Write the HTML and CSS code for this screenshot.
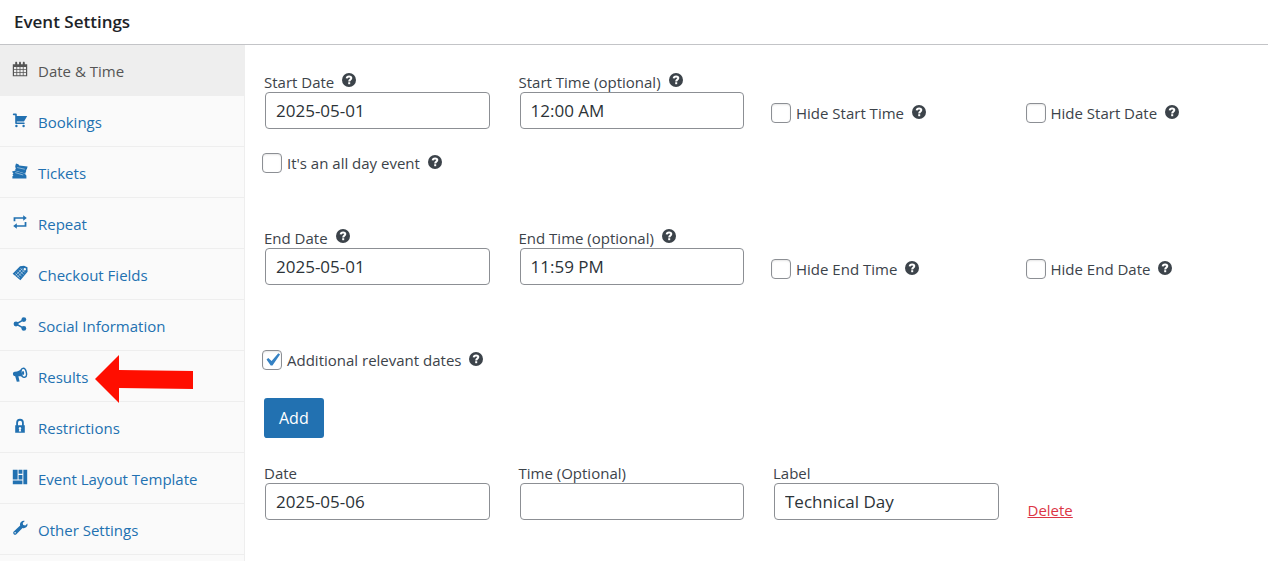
FILE: index.html
```html
<!DOCTYPE html>
<html lang="en">
<head>
  <meta charset="UTF-8">
  <title>Event Settings</title>
  <link rel="stylesheet" href="styles.css">
</head>
<body>

  <!-- shared help icon -->
  <svg class="defs" width="0" height="0">
    <symbol id="help" viewBox="0 0 14 14">
      <circle cx="7" cy="7" r="7" fill="#3c434a"/>
      <path d="M4.700 5.400C4.800 4 5.800 3.400 7.100 3.400c1.300 0 2.200.7 2.200 1.700 0 1.600-2.100 1.500-2.100 3.300" fill="none" stroke="#fff" stroke-width="2"/>
      <rect x="6.200" y="9.200" width="2" height="2" fill="#fff"/>
    </symbol>
  </svg>

  <header>
    <h2>Event Settings</h2>
  </header>

  <div class="panel">
    <nav>
      <ul>
        <li class="active"><a href="#">
          <svg class="icon" viewBox="0 0 20 20"><path fill-rule="evenodd" d="M1 4h3V2.500C4 1.700 4.400 1 5.200 1S6.500 1.700 6.500 2.500V4h2.300V2.500C8.800 1.700 9.200 1 10 1s1.200.7 1.200 1.500V4h2.300V2.500c0-.8.4-1.500 1.200-1.500S16 1.700 16 2.500V4h3v15H1zM2.500 7.500v2.800h3V7.500zm4 0v2.800h3V7.500zm4 0v2.800h3V7.500zm4 0v2.800h3V7.500zM2.500 11.300v2.800h3v-2.800zm4 0v2.800h3v-2.800zm4 0v2.800h3v-2.800zm4 0v2.800h3v-2.800zM2.500 15v2.800h3V15zm4 0v2.800h3V15zm4 0v2.800h3V15zm4 0v2.800h3V15z"/></svg>
          <span>Date &amp; Time</span></a></li>
        <li><a href="#">
          <svg class="icon" viewBox="0 0 20 20"><path d="M6 13h9c.55 0 1 .45 1 1s-.45 1-1 1H5c-.55 0-1-.45-1-1V4H2c-.55 0-1-.45-1-1s.45-1 1-1h3c.55 0 1 .45 1 1v2h13l-4 7H6v1z"/><circle cx="5.500" cy="17.500" r="1.500"/><circle cx="14.500" cy="17.500" r="1.500"/></svg>
          <span>Bookings</span></a></li>
        <li><a href="#">
          <svg class="icon" viewBox="0 0 20 20"><path d="M5 .5l3 1.200 1 1.300L19.500 4.500 18.500 8l-1 .4.300 1.600-1.300 3L3.500 9.500l1.300-2.500-.5-1.500-.3-1.500z"/><path d="M0 10.500l3.500-.8L17 13.300l-.2 1.400 1.200 1v3.800H.5v-3l1.300-1L.5 14.500l1.300-1.200z"/><path d="M6.500 5.700l9.500 2.100M4 12l10 3" fill="none" stroke="#fafafa" stroke-width=".6"/></svg>
          <span>Tickets</span></a></li>
        <li><a href="#">
          <svg class="icon" viewBox="0 0 20 20"><path d="M2 9V4h12V1.500L18.500 5 14 8.500V6H4.200v3zM18 10v6H6v2.500L1.500 15 6 11.500V14h9.800v-4z"/></svg>
          <span>Repeat</span></a></li>
        <li><a href="#">
          <svg class="icon" viewBox="0 0 20 20"><path fill-rule="evenodd" d="M.8 11L10 1.500l5-.5 4.300 1.800.2 5.700L10.500 19zm15.200-7.300a1.500 1.500 0 1 0 0 3 1.500 1.500 0 0 0 0-3z"/><path d="M4 10.500l6 6M6.200 8.300l6 6M8.400 6.100l6 6M10.600 3.900l5.500 5.500M4.500 13l8.500-8.500M6.700 15.200l8.500-8.500" fill="none" stroke="#fafafa" stroke-width=".6"/></svg>
          <span>Checkout Fields</span></a></li>
        <li><a href="#">
          <svg class="icon" viewBox="0 0 20 20"><path d="M15 4.500L5 10l10 5.500" fill="none" stroke="currentColor" stroke-width="2"/><circle cx="14.800" cy="4.500" r="3"/><circle cx="5" cy="10" r="3"/><circle cx="14.800" cy="15.500" r="3"/></svg>
          <span>Social Information</span></a></li>
        <li><a href="#">
          <svg class="icon" viewBox="0 0 20 20"><path d="M12.500 1.500C10 4.500 7.500 5.500 3.500 6 1.800 6.300 1 7.500 1.200 9s1.300 2.500 2.800 2.500L6 18.500l3.500-.5-1.500-6.300c2.500-.2 4.500.3 7 1.800z"/><ellipse cx="14.700" cy="7.300" rx="3.300" ry="5.700" transform="rotate(-12 14.700 7.300)" fill="#fafafa" stroke="currentColor" stroke-width="1.800"/><ellipse cx="13.800" cy="7.500" rx="1.400" ry="2.500"/></svg>
          <span>Results</span></a>
          <svg class="arrow" viewBox="0 0 98 48"><path d="M0 24L24 0v15l74 1v18l-74-1v15z" fill="#ff0e00"/></svg></li>
        <li><a href="#">
          <svg class="icon" viewBox="0 0 20 20"><path fill-rule="evenodd" d="M4 9h1.200V6a4.800 5 0 0 1 9.600 0v3H16v9.500H4zm3.500 0h5V6a2.500 2.700 0 0 0-5 0zm1.600 5.200l-.6 2.600h3l-.6-2.600a1.600 1.600 0 1 0-1.800 0z"/></svg>
          <span>Restrictions</span></a></li>
        <li><a href="#">
          <svg class="icon" viewBox="0 0 20 20"><path d="M1 1h6v12H1zM8.200 1H13v5H8.200zM8.200 7.500H13V13H8.200zM14.200 1H19v18h-4.800zM1 14.300h12V19H1z"/></svg>
          <span>Event Layout Template</span></a></li>
        <li><a href="#">
          <svg class="icon" viewBox="0 0 20 20"><path d="M16.700 6.800l2.500-2.400c.5 2-.1 3.700-1.500 4.800-1.400 1.100-3 1.300-4.500.7L5.500 17.700c-1 .9-2.400.9-3.300 0s-.9-2.300 0-3.200l8-7.500C9.700 5.300 10 3.600 11.300 2.400c1.300-1.200 3.100-1.600 4.700-1.100l-2.600 2.500.6 2.300z"/><circle cx="3.900" cy="16" r=".9" fill="#fafafa"/></svg>
          <span>Other Settings</span></a></li>
      </ul>
    </nav>

    <main>
      <div class="row">
        <div class="field">
          <label for="startDate">Start Date <svg class="help"><use href="#help"/></svg></label>
          <input type="text" id="startDate" value="2025-05-01">
        </div>
        <div class="field">
          <label for="startTime">Start Time (optional) <svg class="help"><use href="#help"/></svg></label>
          <input type="text" id="startTime" value="12:00 AM">
        </div>
        <label class="check"><input type="checkbox"> Hide Start Time <svg class="help"><use href="#help"/></svg></label>
        <label class="check"><input type="checkbox"> Hide Start Date <svg class="help"><use href="#help"/></svg></label>
      </div>

      <label class="check all-day"><input type="checkbox"> It's an all day event <svg class="help"><use href="#help"/></svg></label>

      <div class="row">
        <div class="field">
          <label for="endDate">End Date <svg class="help"><use href="#help"/></svg></label>
          <input type="text" id="endDate" value="2025-05-01">
        </div>
        <div class="field">
          <label for="endTime">End Time (optional) <svg class="help"><use href="#help"/></svg></label>
          <input type="text" id="endTime" value="11:59 PM">
        </div>
        <label class="check"><input type="checkbox"> Hide End Time <svg class="help"><use href="#help"/></svg></label>
        <label class="check"><input type="checkbox"> Hide End Date <svg class="help"><use href="#help"/></svg></label>
      </div>

      <label class="check additional"><input type="checkbox" checked> Additional relevant dates <svg class="help"><use href="#help"/></svg></label>

      <button type="button" class="add">Add</button>

      <div class="row">
        <div class="field">
          <label for="date">Date</label>
          <input type="text" id="date" value="2025-05-06">
        </div>
        <div class="field">
          <label for="time">Time (Optional)</label>
          <input type="text" id="time">
        </div>
        <div class="field">
          <label for="label">Label</label>
          <input type="text" id="label" value="Technical Day">
        </div>
        <a href="#" class="delete">Delete</a>
      </div>
    </main>
  </div>

</body>
</html>
```
FILE: styles.css
```css
* {
  box-sizing: border-box;
}

body {
  display: flex;
  flex-direction: column;
  min-height: 100vh;
  margin: 0;
  font-family: "Open Sans", "Noto Sans", sans-serif;
  font-size: 15px;
  line-height: 20px;
  color: #3c434a;
  background: #fff;
}

.defs {
  position: absolute;
}

header {
  padding: 12px 14px;
  border-bottom: 1px solid #c3c4c7;
}

h2 {
  margin: 0;
  font-size: 17px;
  line-height: 20px;
  font-weight: 600;
  color: #1d2327;
}

.panel {
  display: flex;
  flex: 1;
}

nav {
  flex: 0 0 245px;
  background: #fafafa;
  border-right: 1px solid #eee;
}

nav ul {
  list-style: none;
  margin: 0;
  padding: 0;
}

nav li {
  position: relative;
}

nav a {
  display: flex;
  align-items: center;
  gap: 10px;
  height: 51px;
  padding: 0 12px;
  border-bottom: 1px solid #eee;
  color: #2271b1;
  text-decoration: none;
}

nav .active a {
  background: #eee;
  color: #555;
}

nav a span {
  padding-top: 2px;
}

.icon {
  width: 16px;
  height: 16px;
  margin-bottom: 2px;
  fill: currentColor;
}

.arrow {
  position: absolute;
  left: 95px;
  top: 4px;
  width: 98px;
  height: 48px;
}

main {
  flex: 1;
  padding: 27px 15px 30px 19px;
}

.row {
  display: grid;
  grid-template-columns: repeat(4, 1fr);
  gap: 29px;
  align-items: end;
}

.field label {
  display: flex;
  align-items: center;
}

.help {
  width: 14px;
  height: 14px;
  margin: 0 0 5px 8px;
}

.field input {
  display: block;
  width: calc(100% - 1px);
  height: 37px;
  margin: 0 0 0 1px;
  padding: 0 10px;
  border: 1px solid #8c8f94;
  border-radius: 4px;
  background: #fff;
  color: #2c3338;
  font: inherit;
  font-size: 17px;
}

.check {
  display: flex;
  align-items: center;
  margin: 0 0 6px -2px;
}

.check .help {
  margin: 0 0 3px 8px;
}

.check input {
  appearance: none;
  width: 20px;
  height: 20px;
  margin: 0 5px 0 0;
  border: 1px solid #8c8f94;
  border-radius: 4px;
  background: #fff center / 26px no-repeat;
  box-shadow: inset 0 1px 2px rgba(0, 0, 0, 0.1);
}

.check input:checked {
  background-image: url("data:image/svg+xml,%3Csvg xmlns='http://www.w3.org/2000/svg' viewBox='0 0 20 20'%3E%3Cpath d='M14.83 4.89l1.34.94-5.81 8.38H9.02L5.78 9.67l1.34-1.25 2.57 2.4z' fill='%233582c4'/%3E%3C/svg%3E");
}

.all-day {
  margin-top: 24px;
  margin-bottom: 55px;
}

.additional {
  margin-top: 65px;
  margin-bottom: 28px;
}

.add {
  display: block;
  height: 40px;
  margin-bottom: 25px;
  padding: 0 15px;
  border: 0;
  border-radius: 3px;
  background: #2271b1;
  color: #fff;
  font: inherit;
  font-size: 16px;
  cursor: pointer;
}

.delete {
  color: #dc3545;
}
```
